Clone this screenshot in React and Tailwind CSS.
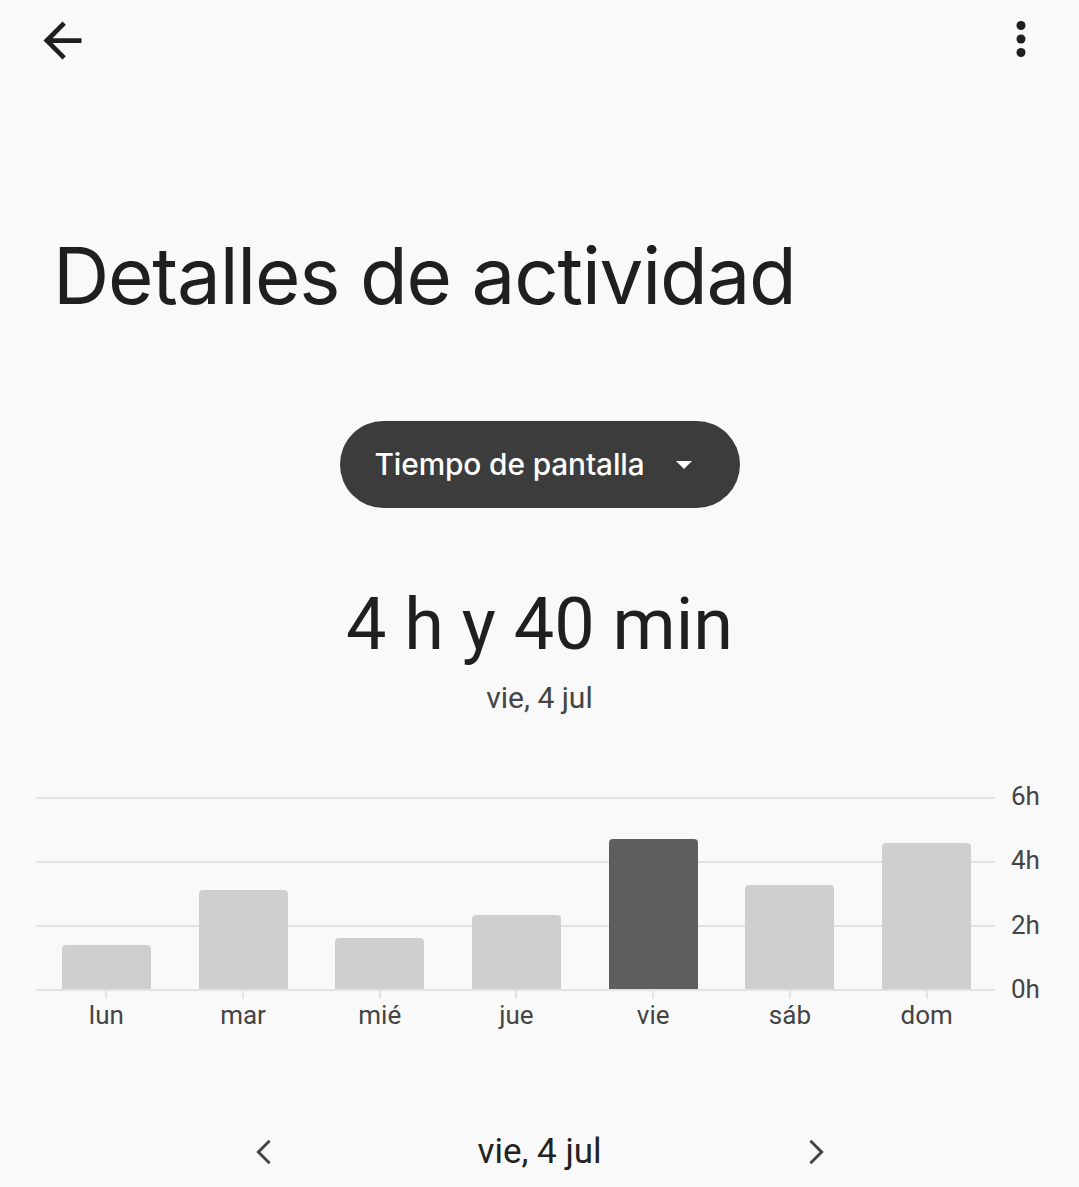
import React from 'react';

const DAYS = [
  { label: 'lun', hours: 1.37 },
  { label: 'mar', hours: 3.08 },
  { label: 'mié', hours: 1.58 },
  { label: 'jue', hours: 2.3 },
  { label: 'vie', hours: 4.67, active: true },
  { label: 'sáb', hours: 3.23 },
  { label: 'dom', hours: 4.54 },
];

const MAX_HOURS = 6;
const CHART_H = 193;

function BackIcon() {
  return (
    <svg width="57" height="57" viewBox="0 0 24 24" fill="#1f1f1f">
      <path d="M20 11H7.83l5.59-5.59L12 4l-8 8 8 8 1.41-1.41L7.83 13H20v-2z" />
    </svg>
  );
}

function MoreIcon() {
  return (
    <svg width="54" height="54" viewBox="0 0 24 24" fill="#1f1f1f">
      <circle cx="12" cy="6" r="2" />
      <circle cx="12" cy="12" r="2" />
      <circle cx="12" cy="18" r="2" />
    </svg>
  );
}

function Chevron({ dir }) {
  return (
    <svg width="24" height="30" viewBox="0 0 12 16" fill="none">
      <path d={dir === 'left' ? 'M9 2L3 8l6 6' : 'M3 2l6 6-6 6'} stroke="#444" strokeWidth="1.6" />
    </svg>
  );
}

export default function App() {
  return (
    <div className="w-[1079px] h-[1187px] overflow-hidden bg-[#f9f9f9] text-[#1f1f1f]" style={{ fontFamily: 'Roboto, "Liberation Sans", sans-serif' }}>
      {/* Top bar */}
      <div className="flex items-start justify-between pl-[34px] pr-[31px] pt-[12px] h-[68px]">
        <BackIcon />
        <MoreIcon />
      </div>

      <h1 className="pl-[53px] mt-[169px] text-[78px] leading-none tracking-[-1.2px]" style={{ fontFamily: 'Inter, "Noto Sans", sans-serif' }}>
        Detalles de actividad
      </h1>

      <div className="flex justify-center mt-[106px]">
        <button className="flex items-center h-[87px] w-[400px] rounded-full bg-[#3c3c3c] pl-[35px] text-white">
          <span className="text-[29.8px] font-medium tracking-[-0.1px]" style={{ fontFamily: 'Inter, "Noto Sans", sans-serif' }}>Tiempo de pantalla</span>
          <span className="ml-[31px] border-x-[8px] border-t-[8px] border-x-transparent border-t-white" />
        </button>
      </div>

      <div className="mt-[81px] text-center text-[72px] leading-none">4 h y 40 min</div>
      <div className="mt-[22px] text-center text-[30px] leading-none text-[#444]">vie, 4 jul</div>

      {/* Chart */}
      <div className="mt-[84px] flex pl-[36px]">
        <div className="w-[959px]">
          <div className="relative h-[194px]">
            <div className="flex h-full flex-col justify-between">
              <div className="h-[2px] bg-[#e2e2e2]" />
              <div className="h-[2px] bg-[#e2e2e2]" />
              <div className="h-[2px] bg-[#e2e2e2]" />
              <div className="h-[2px] bg-[#e2e2e2]" />
            </div>
            <div className="absolute inset-x-0 bottom-[2px] top-0 grid grid-cols-7 pl-[2px]">
              {DAYS.map(d => (
                <div key={d.label} className="flex items-end justify-center">
                  <div
                    className={`w-[89px] rounded-t-[4px] ${d.active ? 'bg-[#5e5e5e]' : 'bg-[#cfcfcf]'}`}
                    style={{ height: Math.round((d.hours / MAX_HOURS) * CHART_H) }}
                  />
                </div>
              ))}
            </div>
          </div>
          <div className="grid grid-cols-7 pl-[2px]">
            {DAYS.map(d => (
              <div key={d.label} className="flex flex-col items-center">
                <div className="h-[8px] w-[2px] bg-[#e2e2e2]" />
                <div className="mt-[3px] text-[26px] leading-none text-[#444]">{d.label}</div>
              </div>
            ))}
          </div>
        </div>
        <div className="ml-[16px] -mt-[14px] flex h-[219px] flex-col justify-between text-[26px] leading-none text-[#444]">
          <span>6h</span>
          <span>4h</span>
          <span>2h</span>
          <span>0h</span>
        </div>
      </div>

      {/* Date navigation */}
      <div className="mt-[106px] flex items-center justify-center">
        <Chevron dir="left" />
        <div className="w-[528px] text-center text-[35px] leading-none text-[#222]">vie, 4 jul</div>
        <Chevron dir="right" />
      </div>
    </div>
  );
}
